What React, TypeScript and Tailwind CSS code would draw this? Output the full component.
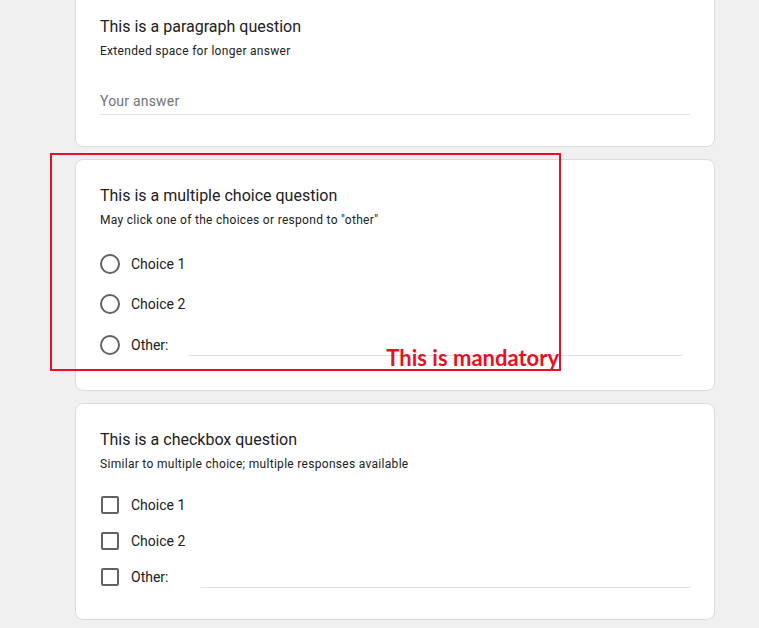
import React from "react";

const font = { fontFamily: "Roboto, 'Liberation Sans', sans-serif" };

const Radio = () => (
  <span className="w-5 h-5 rounded-full border-2 border-[#5f6368] shrink-0" />
);

const Checkbox = () => (
  <span className="w-[18px] h-[18px] ml-px rounded-[2px] border-2 border-[#5f6368] shrink-0" />
);

const QuestionHeader = ({ title, desc }: { title: string; desc: string }) => (
  <div>
    <h2 className="text-[16px] leading-6 text-[#202124]">{title}</h2>
    <p className="text-[12px] leading-[18px] mt-[3px] text-[#202124] tracking-[0.3px]">{desc}</p>
  </div>
);

const App = () => {
  return (
    <div className="min-h-[628px] bg-[#f0f0f0] overflow-hidden" style={font}>
      <div className="w-[640px] ml-[75px] flex flex-col gap-[12px] -mt-[10px] pb-8">
        {/* paragraph */}
        <div className="bg-white border border-[#dadce0] rounded-lg pt-6 px-6 pb-[31px]">
          <QuestionHeader
            title="This is a paragraph question"
            desc="Extended space for longer answer"
          />
          <div className="mt-[31px] pb-[3px] border-b border-[#e0e0e0]">
            <span className="block text-[14px] leading-5 text-[#70757a] tracking-[0.2px]">
              Your answer
            </span>
          </div>
        </div>

        {/* multiple choice */}
        <div className="relative bg-white border border-[#dadce0] rounded-lg pt-6 px-6 pb-[25px]">
          <QuestionHeader
            title="This is a multiple choice question"
            desc='May click one of the choices or respond to "other"'
          />
          <div className="mt-[15px] flex flex-col">
            <div className="h-10 flex items-center gap-[11px]">
              <Radio />
              <span className="text-[14px] text-[#202124]">Choice 1</span>
            </div>
            <div className="h-10 flex items-center gap-[11px]">
              <Radio />
              <span className="text-[14px] text-[#202124]">Choice 2</span>
            </div>
            <div className="h-10 mt-px flex items-center gap-[11px]">
              <Radio />
              <span className="text-[14px] text-[#202124]">Other:</span>
              <div className="self-start flex-1 ml-[10px] mr-[8px] mt-[9px] h-[22px] border-b border-[#e0e0e0]" />
            </div>
          </div>
          {/* annotation overlay */}
          <div className="absolute -left-[26px] -top-[7px] w-[511px] h-[218px] border-2 border-[#e81123]">
            <span
              className="absolute right-0 bottom-0 text-[22px] leading-[22px] font-bold text-[#e81123]"
              style={{ fontFamily: "Lato, sans-serif" }}
            >
              This is mandatory
            </span>
          </div>
        </div>

        {/* checkbox */}
        <div className="bg-white border border-[#dadce0] rounded-lg pt-6 px-6 pb-[24px]">
          <QuestionHeader
            title="This is a checkbox question"
            desc="Similar to multiple choice; multiple responses available"
          />
          <div className="mt-[14px] flex flex-col">
            {["Choice 1", "Choice 2"].map((c) => (
              <div key={c} className="h-9 flex items-center gap-[12px]">
                <Checkbox />
                <span className="text-[14px] text-[#202124]">{c}</span>
              </div>
            ))}
            <div className="h-9 flex items-center gap-[12px]">
              <Checkbox />
              <span className="text-[14px] text-[#202124]">Other:</span>
              <div className="self-start flex-1 ml-[21px] mt-[7px] h-[22px] border-b border-[#e0e0e0]" />
            </div>
          </div>
        </div>
      </div>
    </div>
  );
};

export default App;
